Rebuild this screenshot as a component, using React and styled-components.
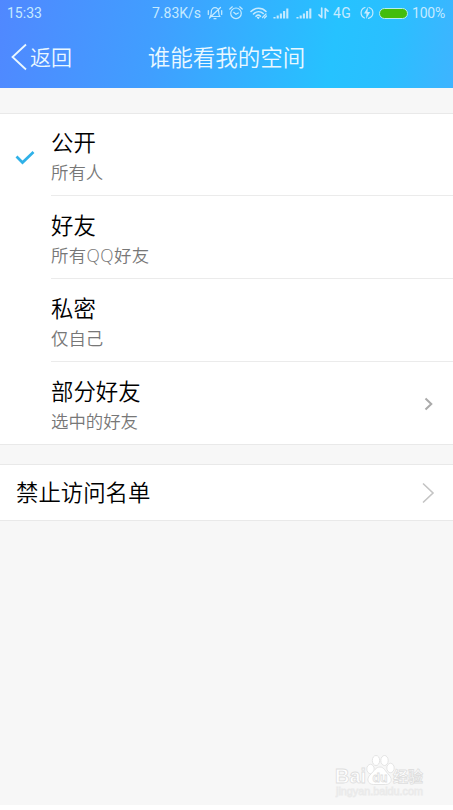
import styled, { createGlobalStyle } from "styled-components";

const GlobalStyle = createGlobalStyle`
  body {
    margin: 0;
    background: #fff;
    font-family: "Noto Sans CJK SC", sans-serif;
  }
`;
const Screen = styled.div`
  height: 805px;
  display: flex;
  flex-direction: column;
  background: #f7f7f7;
  overflow: hidden;
`;
const Header = styled.header`
  height: 88px;
  flex: none;
  color: #eaf8ff;
  background: linear-gradient(100deg, #5088ff 0%, #409fff 35%, #26c2ff 73%, #2abfff 85%, #3eb4ff 100%);
`;
const StatusBar = styled.div`
  height: 26px;
  padding: 0 8px 0 7px;
  display: flex;
  align-items: center;
  justify-content: space-between;
  font-family: Roboto, sans-serif;
  font-size: 14px;
  line-height: 26px;
  color: #c5eaff;
`;
const StatusText = styled.span`
  width: ${({ $width }) => $width}px;
  margin-right: ${({ $gap }) => $gap || 0}px;
  letter-spacing: ${({ $spacing }) => $spacing || 0}px;
  font-weight: 400;
  white-space: nowrap;
`;
const StatusGroup = styled.div`
  display: flex;
  align-items: center;
`;
const StatusIcon = styled.svg`
  width: ${({ $width }) => $width}px;
  height: 16px;
  flex: none;
  margin-right: ${({ $gap }) => $gap}px;
  fill: none;
  stroke: currentColor;
  stroke-width: 1.2;
  stroke-linecap: round;
  stroke-linejoin: round;
`;
const Battery = styled.div`
  width: 27px;
  height: 9px;
  margin-right: 4px;
  border: 1.5px solid #b5edf0;
  border-radius: 6px;
  background: #43bd0c;
`;
const NavBar = styled.div`
  height: 59px;
  display: grid;
  grid-template-columns: 147px auto 147px;
  align-items: center;
`;
const BackButton = styled.div`
  padding-left: 11px;
  display: flex;
  align-items: center;
  gap: 3px;
  font-size: 21px;
  font-weight: 350;
  line-height: 30px;
`;
const BackArrow = styled.svg`
  width: 16px;
  height: 28px;
  margin-top: 3px;
  fill: none;
  stroke: currentColor;
  stroke-width: 1.8;
`;
const Title = styled.h1`
  margin: 0;
  text-align: center;
  white-space: nowrap;
  font-size: 22.5px;
  font-weight: 350;
  line-height: 30px;
`;
const List = styled.div`
  flex: none;
  margin-top: ${({ $top }) => $top}px;
  background: #fff;
  border-top: 1px solid #e9e9e9;
  border-bottom: 1px solid #e9e9e9;
`;
const CheckCell = styled.div`
  width: 51px;
  padding: 36px 0 0 15px;
  box-sizing: border-box;
`;
const CheckMark = styled.svg`
  display: block;
  width: 20px;
  height: 15px;
  fill: none;
  stroke: #2fb1e8;
  stroke-width: 2.7;
`;
const RowBody = styled.div`
  flex: 1;
  display: flex;
  justify-content: space-between;
  align-items: center;
  padding: 1px 20px 0 0;
  box-sizing: border-box;
  border-bottom: ${({ $last }) => ($last ? "none" : "1px solid #ebebeb")};
`;
const RowText = styled.div`
  align-self: flex-start;
  padding-top: 10px;
`;
const RowTitle = styled.div`
  color: #000;
  font-size: 22.4px;
  font-weight: 350;
  line-height: 32px;
`;
const RowNote = styled.div`
  margin-top: 1px;
  color: #777;
  font-family: "Open Sans", "Noto Sans CJK SC", sans-serif;
  font-size: 17.4px;
  font-weight: 350;
  line-height: 28px;
  letter-spacing: ${({ $spacing }) => $spacing || 0}px;
`;
const Row = styled.div`
  height: 83px;
  display: flex;
  &:first-child,
  &:last-child {
    height: 82px;
  }
  & + & ${RowText} {
    padding-top: 11px;
  }
`;
const LinkRow = styled.div`
  height: 55px;
  padding: 0 18px 0 16px;
  display: flex;
  align-items: center;
  justify-content: space-between;
`;
const LinkTitle = styled(RowTitle)`
  padding-bottom: 4px;
`;
const Chevron = styled.svg`
  width: ${({ $size }) => $size / 2 + 2}px;
  height: ${({ $size }) => $size}px;
  fill: none;
  stroke: ${({ $color }) => $color};
  stroke-width: ${({ $stroke }) => $stroke};
`;
const Watermark = styled.svg`
  width: 92px;
  height: 46px;
  flex: none;
  margin: auto 26px 4px auto;
  font-family: "Liberation Sans", "Noto Sans CJK SC", sans-serif;
`;

const rows = [
  { title: "公开", note: "所有人", checked: true },
  { title: "好友", note: "所有QQ好友", spacing: 0.4 },
  { title: "私密", note: "仅自己" },
  { title: "部分好友", note: "选中的好友", more: true },
];

const Signal = ({ gap }) => (
  <StatusIcon $width={16} $gap={gap} viewBox="0 0 16 16">
    <path d="M1.5 13.500V12M4.700 13.500v-3M7.900 13.500V8.500M11.100 13.500V6M14.300 13.500V3.500" strokeWidth="2.100" strokeLinecap="butt" />
  </StatusIcon>
);

const StatusIcons = () => (
  <>
    <StatusIcon $width={16} $gap={6} viewBox="0 0 16 16">
      <path d="M3 11.500c1.300-1 1.300-2 1.300-4.500C4.300 4.500 6 2.700 8 2.700s3.700 1.800 3.700 4.300c0 2.500 0 3.500 1.300 4.500zM7 13.700h2M13.500 2.500l-11 10.500M1.300 5.500v4M14.700 5.500v4" />
    </StatusIcon>
    <StatusIcon $width={14} $gap={7} viewBox="0 0 14 16">
      <circle cx="7" cy="8.300" r="5.300" />
      <path d="M4.700 7.300L7 9.300l2.300-1.300M.8 4L3.300 1.800M13.200 4L10.700 1.800" />
    </StatusIcon>
    <StatusIcon $width={18} $gap={5} viewBox="0 0 18 16">
      <path d="M1 6.500c4-4.300 11-4.300 15 0M3.500 9c3-3 7-3 9.700-.5M6 11.300c1.500-1.500 3-1.500 4.500 0" strokeWidth="1.600" />
      <path d="M7.500 12.500h1.500l-.7.800zM12.500 12.500l3.500-3.500M14.500 13l2-2" />
    </StatusIcon>
    <Signal gap={7} />
    <Signal gap={6} />
    <StatusIcon $width={11} $gap={4} viewBox="0 0 11 16">
      <path d="M3.700 3v9.500L1 9.800M7.300 13V3.500L10 6.200" strokeWidth="1.700" />
    </StatusIcon>
  </>
);

const App = () => {
  return (
    <Screen>
      <GlobalStyle />
      <Header>
        <StatusBar>
          <StatusText $width={36}>15:33</StatusText>
          <StatusGroup>
            <StatusText $width={49} $gap={6}>7.83K/s</StatusText>
            <StatusIcons />
            <StatusText $width={21} $gap={6} $spacing={0.5}>4G</StatusText>
            <StatusIcon $width={14} $gap={5} viewBox="0 0 14 16">
              <path d="M5 2.500a5.600 5.600 0 0 0-.5 10.500M9 2.500A5.600 5.600 0 0 1 8.500 13.300" />
              <path d="M8 2L4 8.500h2.500L6 14l4.200-7H7.500z" fill="currentColor" stroke="none" />
            </StatusIcon>
            <Battery />
            <StatusText $width={33} $spacing={-0.2}>100%</StatusText>
          </StatusGroup>
        </StatusBar>
        <NavBar>
          <BackButton>
            <BackArrow viewBox="0 0 16 28">
              <path d="M15 1.500L1.500 14 15 26.500" />
            </BackArrow>
            返回
          </BackButton>
          <Title>谁能看我的空间</Title>
        </NavBar>
      </Header>
      <List $top={25}>
        {rows.map((row, index) => (
          <Row key={row.title}>
            <CheckCell>
              {row.checked && (
                <CheckMark viewBox="0 0 20 15">
                  <path d="M1.500 6.500l6 6L18.500 2" />
                </CheckMark>
              )}
            </CheckCell>
            <RowBody $last={index === rows.length - 1}>
              <RowText>
                <RowTitle>{row.title}</RowTitle>
                <RowNote $spacing={row.spacing}>{row.note}</RowNote>
              </RowText>
              {row.more && (
                <Chevron $size={14} $color="#aaa" $stroke={2} viewBox="0 0 9 14">
                  <path d="M1.500 1.500L7.300 7l-5.800 5.500" />
                </Chevron>
              )}
            </RowBody>
          </Row>
        ))}
      </List>
      <List $top={19}>
        <LinkRow>
          <LinkTitle>禁止访问名单</LinkTitle>
          <Chevron $size={22} $color="#c4c4c4" $stroke={1.6} viewBox="0 0 13 22">
            <path d="M1 1.500L11 11 1 20.500" />
          </Chevron>
        </LinkRow>
      </List>
      <Watermark viewBox="0 0 92 46" fill="#fff" stroke="#dedede" strokeWidth="0.8">
        <text x="0" y="28" fontSize="20" fontWeight="700" textLength="31" lengthAdjust="spacingAndGlyphs">Bai</text>
        <ellipse cx="35.500" cy="14" rx="3.700" ry="4.700" />
        <ellipse cx="41" cy="5.500" rx="3.700" ry="5" />
        <ellipse cx="49.500" cy="5.500" rx="3.700" ry="5" />
        <ellipse cx="55.500" cy="13" rx="3.700" ry="4.700" />
        <path d="M45 12c4 0 5 4 9 8 4.500 5 1.500 9.500-3.500 9.500h-12C33 29.500 31 24 35 20c4-4 6-8 10-8z" />
        <text x="37.500" y="27" fontSize="13" fontWeight="700" textLength="15" lengthAdjust="spacingAndGlyphs">du</text>
        <text x="58" y="27" fontSize="15" fontWeight="700" textLength="30">经验</text>
        <text x="1" y="40" fontSize="10" stroke="#eaeaea" textLength="87" lengthAdjust="spacingAndGlyphs">jingyan.baidu.com</text>
      </Watermark>
    </Screen>
  );
};

export default App;
